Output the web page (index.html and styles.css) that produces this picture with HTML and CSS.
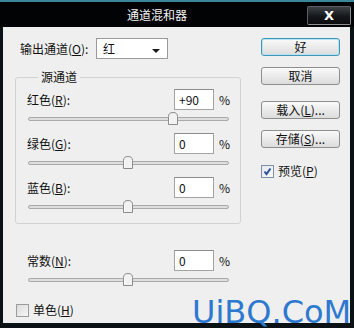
FILE: index.html
```html
<!DOCTYPE html>
<html>
<head>
<meta charset="utf-8">
<link rel="stylesheet" href="styles.css">
</head>
<body>
<div class="window">
  <div class="titlebar">
    <div class="title">通道混和器</div>
    <div class="close">X</div>
  </div>
  <div class="content">
    <div class="left">
      <div class="out-row">
        <span class="out-label">输出通道(<u>O</u>):</span>
        <div class="select"><span class="sel-text">红</span><span class="arrow"></span></div>
      </div>
      <fieldset class="group">
        <legend class="legend">源通道</legend>
        <div class="channel">
          <div class="ch-row"><span class="ch-label">红色(<u>R</u>):</span><div class="input">+90</div><span class="pct">%</span></div>
          <div class="slider"><div class="track"></div><svg class="thumb" style="left:140px" width="10" height="13" viewBox="0 0 10 13"><path d="M0.5 12.5 V4.5 Q0.5 0.5 5 0.5 Q9.5 0.5 9.5 4.5 V12.5 Z" fill="#f2f2f2" stroke="#8c8c8c"/><path d="M1.5 11.5 V5" stroke="#ffffff"/></svg></div>
        </div>
        <div class="channel">
          <div class="ch-row"><span class="ch-label">绿色(<u>G</u>):</span><div class="input">0</div><span class="pct">%</span></div>
          <div class="slider"><div class="track"></div><svg class="thumb" style="left:95px" width="10" height="13" viewBox="0 0 10 13"><path d="M0.5 12.5 V4.5 Q0.5 0.5 5 0.5 Q9.5 0.5 9.5 4.5 V12.5 Z" fill="#f2f2f2" stroke="#8c8c8c"/><path d="M1.5 11.5 V5" stroke="#ffffff"/></svg></div>
        </div>
        <div class="channel">
          <div class="ch-row"><span class="ch-label">蓝色(<u>B</u>):</span><div class="input">0</div><span class="pct">%</span></div>
          <div class="slider"><div class="track"></div><svg class="thumb" style="left:95px" width="10" height="13" viewBox="0 0 10 13"><path d="M0.5 12.5 V4.5 Q0.5 0.5 5 0.5 Q9.5 0.5 9.5 4.5 V12.5 Z" fill="#f2f2f2" stroke="#8c8c8c"/><path d="M1.5 11.5 V5" stroke="#ffffff"/></svg></div>
        </div>
      </fieldset>
      <div class="channel const">
        <div class="ch-row"><span class="ch-label">常数(<u>N</u>):</span><div class="input">0</div><span class="pct">%</span></div>
        <div class="slider"><div class="track"></div><svg class="thumb" style="left:95px" width="10" height="13" viewBox="0 0 10 13"><path d="M0.5 12.5 V4.5 Q0.5 0.5 5 0.5 Q9.5 0.5 9.5 4.5 V12.5 Z" fill="#f2f2f2" stroke="#8c8c8c"/><path d="M1.5 11.5 V5" stroke="#ffffff"/></svg></div>
      </div>
      <div class="check-row mono">
        <span class="box"></span><span class="check-label">单色(<u>H</u>)</span>
      </div>
    </div>
    <div class="right">
      <div class="btn default">好</div>
      <div class="btn cancel">取消</div>
      <div class="btn load">载入(<u>L</u>)...</div>
      <div class="btn save">存储(<u>S</u>)...</div>
      <div class="check-row preview">
        <span class="box checked"><svg width="9" height="9" viewBox="0 0 9 9"><path d="M1.5 4.5 L3.5 7 L7.5 1.5" fill="none" stroke="#2b4f9c" stroke-width="2"/></svg></span><span class="check-label">预览(<u>P</u>)</span>
      </div>
    </div>
  </div>
  <div class="watermark">UiBQ.CoM</div>
</div>
</body>
</html>
```

FILE: styles.css
```css
* { box-sizing: border-box; }
html, body { margin: 0; padding: 0; background: #0c1418; }
body { font-family: "Noto Sans CJK SC", "DejaVu Sans", sans-serif; font-size: 12px; color: #111; }
u { text-decoration: underline; text-underline-offset: 1px; }

.window {
  position: relative;
  width: 354px;
  height: 328px;
  background: #0a1216;
  border-top: 2px solid #3a8799;
  padding: 0 4px 5px 3px;
}

.titlebar {
  display: flex;
  align-items: center;
  height: 25px;
  margin: 0 -4px 0 -3px;
  background: #020304;
}
.title {
  flex: 1;
  text-align: center;
  padding-left: 7px;
  color: #f4f4f4;
  font-size: 12px;
  line-height: 16px;
}
.close {
  width: 44px;
  height: 19px;
  margin-right: 3px;
  margin-top: 2px;
  border: 1px solid #8a8f94;
  border-top-color: #5a5f64;
  border-left-color: #5a5f64;
  border-radius: 2px;
  background: linear-gradient(#3c4146, #15181b 55%, #0a0c0e);
  color: #fff;
  font-family: "DejaVu Sans", sans-serif;
  font-weight: bold;
  font-size: 13px;
  line-height: 17px;
  text-align: center;
}

.content {
  display: flex;
  height: 296px;
  background: #efefef;
}

.left {
  width: 238px;
  padding-left: 12px;
  padding-top: 11px;
}

.out-row {
  display: flex;
  align-items: center;
  margin-left: 5px;
  height: 21px;
}
.out-label { width: 76px; line-height: 16px; }
.select {
  position: relative;
  width: 72px;
  height: 21px;
  background: #fff;
  border: 1px solid #9a9a9a;
  display: flex;
  align-items: center;
  padding-left: 6px;
}
.sel-text { flex: 1; line-height: 16px; }
.arrow {
  width: 0;
  height: 0;
  margin-right: 7px;
  margin-top: 4px;
  border-left: 4px solid transparent;
  border-right: 4px solid transparent;
  border-top: 4px solid #1a1a1a;
}

.group {
  width: 226px;
  margin: 10px 0 0 0;
  padding: 4px 0 10px 11px;
  border: 1px solid #d2d2d2;
  border-radius: 3px;
  min-inline-size: 0;
}
.legend {
  margin-left: 11px;
  padding: 0 3px;
  line-height: 16px;
}

.channel + .channel { margin-top: 8px; }
.ch-row {
  display: flex;
  align-items: center;
  height: 21px;
}
.ch-label { width: 147px; line-height: 16px; }
.input {
  width: 40px;
  height: 21px;
  background: #fff;
  border: 1px solid #a3a3a3;
  border-top-color: #8c8c8c;
  padding-left: 4px;
  line-height: 19px;
}
.pct { margin-left: 5px; line-height: 16px; }

.slider {
  position: relative;
  width: 201px;
  height: 13px;
  margin-top: 2px;
  margin-left: 1px;
}
.track {
  position: absolute;
  left: 0;
  right: 0;
  top: 5px;
  height: 4px;
  border: 1px solid #a9a9a9;
  border-radius: 2px;
  background: #dedede;
}
.thumb { position: absolute; top: 0; display: block; }

.const { margin-left: 12px; margin-top: 26px; }

.check-row {
  display: flex;
  align-items: center;
}
.mono { margin-top: 16px; margin-left: 1px; }
.box {
  width: 13px;
  height: 13px;
  border: 1px solid #9c9c9c;
  background: linear-gradient(135deg, #dcdcdc, #f6f6f6);
  display: flex;
  align-items: center;
  justify-content: center;
}
.box.checked { border-color: #7f8fa8; background: linear-gradient(135deg, #e4e8ee, #fafafa); }
.check-label { margin-left: 4px; line-height: 16px; }

.right {
  margin-left: 20px;
  padding-top: 11px;
  width: 79px;
}
.btn {
  width: 79px;
  height: 18px;
  border: 1px solid #8e8e8e;
  border-radius: 3px;
  background: linear-gradient(#fafafa, #ebebeb 50%, #dcdcdc);
  text-align: center;
  line-height: 16px;
}
.default {
  border-color: #3f97b6;
  box-shadow: inset 0 0 0 1px #b9e3f2;
}
.cancel { margin-top: 11px; }
.load { margin-top: 16px; }
.save { margin-top: 11px; }
.preview { margin-top: 15px; }

.watermark {
  position: absolute;
  left: 192px;
  top: 296px;
  font-family: "DejaVu Sans", sans-serif;
  font-size: 32px;
  line-height: 28px;
  height: 28px;
  color: #2d79cf;
  white-space: nowrap;
}
```
